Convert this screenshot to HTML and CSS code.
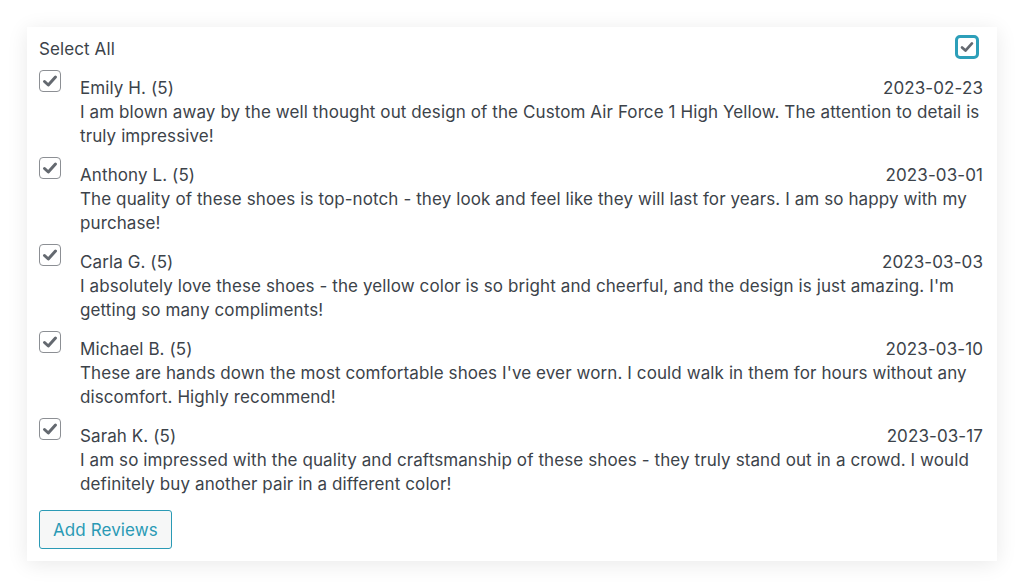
FILE: index.html
```html
<!DOCTYPE html>
<html>
<head>
<meta charset="utf-8">
<link rel="stylesheet" href="styles.css">
</head>
<body>
<div class="card">
  <div class="header">
    <span class="label">Select All</span>
    <span class="cb cb-focus"><svg viewBox="0 0 20 20"><path d="M4.5 10.5 L8.3 14 L15.5 6" /></svg></span>
  </div>
  <div class="item">
    <span class="cb"><svg viewBox="0 0 20 20"><path d="M4.5 10.5 L8.3 14 L15.5 6" /></svg></span>
    <div class="content">
      <div class="meta"><span>Emily H. (5)</span><span>2023-02-23</span></div>
      <p class="text">I am blown away by the well thought out design of the Custom Air Force 1 High Yellow. The attention to detail is truly impressive!</p>
    </div>
  </div>
  <div class="item">
    <span class="cb"><svg viewBox="0 0 20 20"><path d="M4.5 10.5 L8.3 14 L15.5 6" /></svg></span>
    <div class="content">
      <div class="meta"><span>Anthony L. (5)</span><span>2023-03-01</span></div>
      <p class="text">The quality of these shoes is top-notch - they look and feel like they will last for years. I am so happy with my purchase!</p>
    </div>
  </div>
  <div class="item">
    <span class="cb"><svg viewBox="0 0 20 20"><path d="M4.5 10.5 L8.3 14 L15.5 6" /></svg></span>
    <div class="content">
      <div class="meta"><span>Carla G. (5)</span><span>2023-03-03</span></div>
      <p class="text">I absolutely love these shoes - the yellow color is so bright and cheerful, and the design is just amazing. I'm getting so many compliments!</p>
    </div>
  </div>
  <div class="item">
    <span class="cb"><svg viewBox="0 0 20 20"><path d="M4.5 10.5 L8.3 14 L15.5 6" /></svg></span>
    <div class="content">
      <div class="meta"><span>Michael B. (5)</span><span>2023-03-10</span></div>
      <p class="text">These are hands down the most comfortable shoes I've ever worn. I could walk in them for hours without any discomfort. Highly recommend!</p>
    </div>
  </div>
  <div class="item">
    <span class="cb"><svg viewBox="0 0 20 20"><path d="M4.5 10.5 L8.3 14 L15.5 6" /></svg></span>
    <div class="content">
      <div class="meta"><span>Sarah K. (5)</span><span>2023-03-17</span></div>
      <p class="text">I am so impressed with the quality and craftsmanship of these shoes - they truly stand out in a crowd. I would definitely buy another pair in a different color!</p>
    </div>
  </div>
  <div class="actions">
    <button class="btn">Add Reviews</button>
  </div>
</div>
</body>
</html>
```

FILE: styles.css
```css
html, body {
  margin: 0;
  padding: 0;
  background: #ffffff;
}
body {
  padding: 27px 27px 27px 27px;
  font-family: Inter, "Noto Sans", sans-serif;
  font-size: 17px;
  line-height: 24px;
  letter-spacing: 0.1px;
  color: #3c434a;
}
.card {
  width: 970px;
  box-sizing: border-box;
  background: #fff;
  box-shadow: 0 3px 20px rgba(0,0,0,0.09);
  padding: 10px 14px 12px 12px;
  display: flex;
  flex-direction: column;
  gap: 15px;
}
.header {
  display: flex;
  justify-content: space-between;
  align-items: flex-start;
  height: 24px;
}
.cb {
  display: inline-flex;
  box-sizing: border-box;
  width: 22px;
  height: 22px;
  border: 1px solid #8c8f94;
  border-radius: 4px;
  background: #fff;
  flex: none;
}
.cb svg {
  width: 100%;
  height: 100%;
  fill: none;
  stroke: #646970;
  stroke-width: 3;
  stroke-linecap: round;
  stroke-linejoin: round;
}
.cb-focus {
  width: 24px;
  height: 24px;
  border: 3px solid #2d9fb9;
  border-radius: 5px;
  margin-top: -2px;
  margin-right: 4px;
}
.item {
  display: flex;
  align-items: flex-start;
}
.item .cb {
  margin-top: -6px;
  margin-right: 19px;
}
.content {
  flex: 1;
}
.meta {
  display: flex;
  justify-content: space-between;
}
.text {
  margin: 0;
}
.actions {
  display: flex;
  margin-top: -1px;
}
.btn {
  font-family: inherit;
  font-size: 17px;
  letter-spacing: 0.1px;
  color: #2a9ab5;
  background: #f6f7f7;
  border: 1px solid #2a9ab5;
  border-radius: 3px;
  height: 39px;
  padding: 0 13px;
}
```
